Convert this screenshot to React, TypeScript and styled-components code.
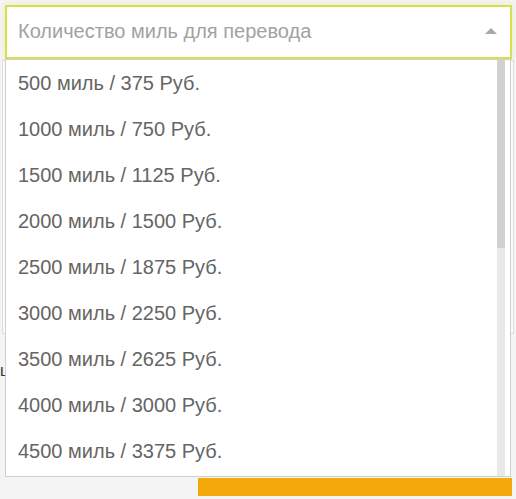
import React from "react";
import styled, { createGlobalStyle } from "styled-components";

const Global = createGlobalStyle`
  html, body { margin: 0; padding: 0; }
  body {
    background: #f4f4f4;
    font-family: "Liberation Sans", Arial, sans-serif;
  }
`;

const Page = styled.div`
  width: 516px;
  height: 499px;
  overflow: hidden;
  display: flex;
  flex-direction: column;
`;

const SelectWrap = styled.div`
  position: relative;
  margin: 5px 4px 0 5px;
  z-index: 2;
`;

const SelectBox = styled.div`
  box-sizing: border-box;
  height: 54px;
  border: 2px solid #d6e04c;
  background: #fff;
  box-shadow: 0 0 6px rgba(222, 230, 120, 0.45);
  display: flex;
  align-items: center;
  justify-content: space-between;
  padding: 0 13px 0 11px;
`;

const Placeholder = styled.span`
  font-size: 20px;
  color: #a2a2a2;
  margin-top: -2px;
`;

const Caret = styled.span`
  width: 0;
  height: 0;
  border-left: 6px solid transparent;
  border-right: 6px solid transparent;
  border-bottom: 6px solid #a8a8a8;
  margin-top: -3px;
`;

const DropPanel = styled.div`
  position: absolute;
  top: 54px;
  left: 0;
  right: 1px;
  height: 418px;
  box-sizing: border-box;
  background: #fff;
  border: 1px solid #cfcfcf;
  overflow: hidden;
`;

const OptionList = styled.ul`
  margin: 0;
  padding: 0 13px 0 0;
  list-style: none;
`;

const Option = styled.li`
  height: 46px;
  display: flex;
  align-items: center;
  padding-left: 12px;
  font-size: 20px;
  color: #656565;
  white-space: nowrap;
`;

const ScrollTrack = styled.div`
  position: absolute;
  top: 0;
  bottom: 0;
  right: 5px;
  width: 8px;
  background: #e8e8e8;
`;

const ScrollThumb = styled.div`
  width: 100%;
  background: #d1d1d1;
`;

const UnderCard = styled.div`
  margin: 1px 2px 0 2px;
  height: 272px;
  background: #fbfbfb;
  border: 1px solid #dcdcdc;
`;

const Hint = styled.div`
  margin: 28px 0 0 0;
  font-size: 16px;
  color: #333;
  height: 18px;
`;

const Spacer = styled.div`
  flex: 1;
`;

const Submit = styled.div`
  margin: 0 4px 3px 198px;
  height: 18px;
  background: #f4a80a;
`;

const TOTAL = 20;
const VISIBLE = 9;
const items = Array.from({ length: VISIBLE }, (_, i) => {
  const miles = (i + 1) * 500;
  const rub = miles * 0.75;
  return `${miles} миль / ${rub} Руб.`;
});

export default function App() {
  const viewport = 416;
  const thumb = Math.round((viewport * viewport) / (TOTAL * 46));
  return (
    <>
      <Global />
      <Page>
        <SelectWrap>
          <SelectBox>
            <Placeholder>Количество миль для перевода</Placeholder>
            <Caret />
          </SelectBox>
          <DropPanel>
            <OptionList>
              {items.map((t) => (
                <Option key={t}>{t}</Option>
              ))}
            </OptionList>
            <ScrollTrack>
              <ScrollThumb style={{ height: thumb }} />
            </ScrollTrack>
          </DropPanel>
        </SelectWrap>
        <UnderCard />
        <Hint>ш</Hint>
        <Spacer />
        <Submit />
      </Page>
    </>
  );
}
